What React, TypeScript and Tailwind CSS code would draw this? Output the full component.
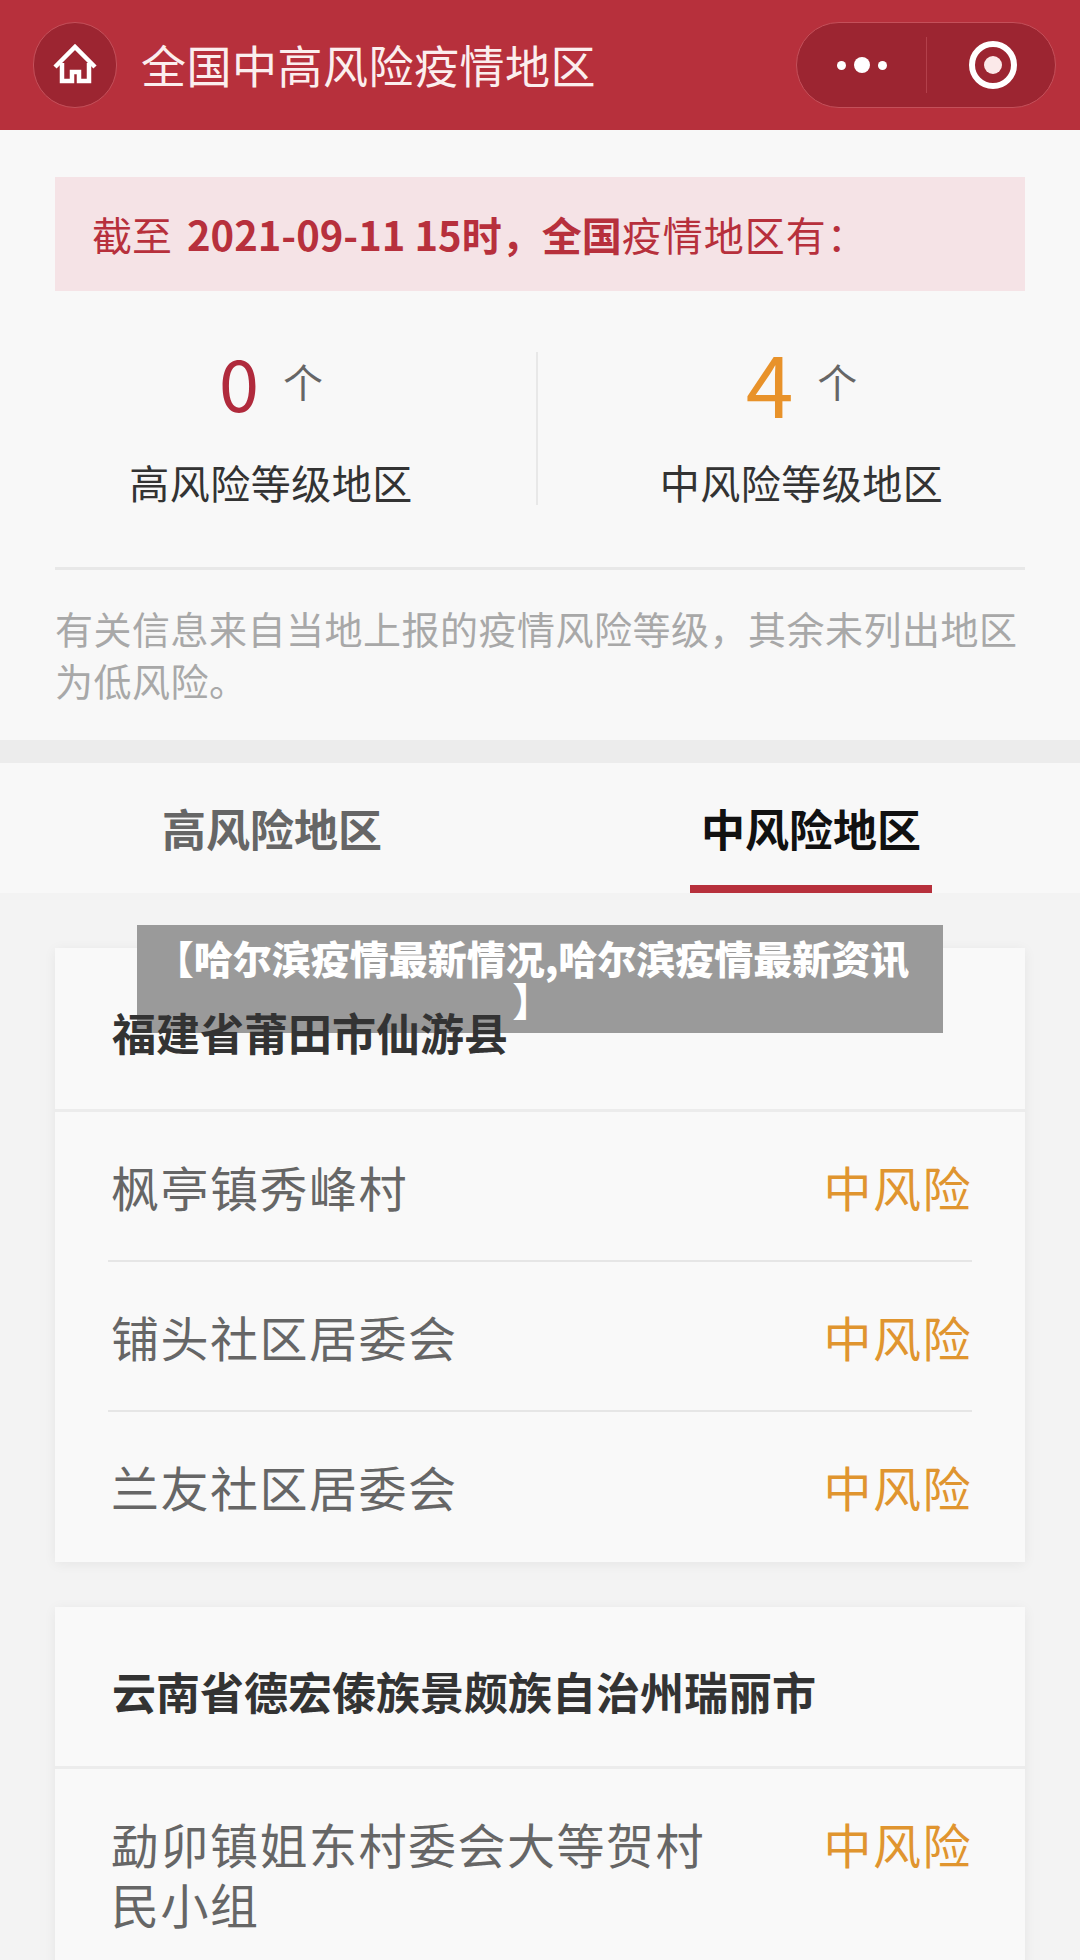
const cjk = "font-['Noto_Sans_CJK_SC','Liberation_Sans',sans-serif]";

function HomeIcon() {
  return (
    <svg width="46" height="44" viewBox="0 0 46 44" fill="none" stroke="#fff" strokeWidth="4.5" strokeLinejoin="miter">
      <path d="M3 24 L23 4 L43 24" />
      <path d="M10 20 V38 H20 V29 H27 V38 H37 V20" />
    </svg>
  );
}

function RiskRow({ name, last }: { name: string; last?: boolean }) {
  return (
    <div className="mx-[53px]">
      <div className="flex justify-between items-start py-[44px] pl-[3px]">
        <div className="w-[600px] text-[48px] leading-[60px] tracking-[1.5px] text-[#666666]">{name}</div>
        <div className="text-[48px] leading-[60px] tracking-[1.5px] text-[#e0952f]">中风险</div>
      </div>
      {!last && <div className="h-[2px] bg-[#e6e6e6]" />}
    </div>
  );
}

function AreaCard({
  title,
  rows,
  className,
  headClass,
  bodyClass,
}: {
  title: string;
  rows: string[];
  className?: string;
  headClass: string;
  bodyClass?: string;
}) {
  return (
    <div className={`mx-[55px] bg-[#f9f9f9] shadow-[0_2px_12px_rgba(0,0,0,0.06)] ${className ?? ""}`}>
      <div className={`pl-[57px] flex items-center text-[44px] font-bold text-[#333333] border-b-[3px] border-[#ececec] ${headClass}`}>
        <span className="relative z-10">{title}</span>
      </div>
      <div className={bodyClass}>
        {rows.map((r, i) => (
          <RiskRow key={r} name={r} last={i === rows.length - 1} />
        ))}
      </div>
    </div>
  );
}

export default function App() {
  return (
    <div className={`${cjk} relative w-[1080px] h-[1960px] overflow-hidden bg-[#f3f3f3]`}>
      <header className="h-[130px] bg-[#b7303c] flex items-center justify-between pl-[33px] pr-[24px]">
        <div className="flex items-center gap-[24px]">
          <div className="w-[84px] h-[86px] rounded-full bg-[#9c2531] border border-[#c4505a] flex items-center justify-center">
            <HomeIcon />
          </div>
          <span className="text-[45px] tracking-[0.5px] text-[#fbeeee]">全国中高风险疫情地区</span>
        </div>
        <div className="w-[260px] h-[86px] rounded-full bg-[#9c2531] border border-[#c4505a] flex items-center">
          <div className="w-[130px] h-[56px] border-r border-[#b3404b] flex items-center justify-center gap-[8px]">
            <span className="w-[9px] h-[9px] rounded-full bg-white" />
            <span className="w-[16px] h-[16px] rounded-full bg-white" />
            <span className="w-[9px] h-[9px] rounded-full bg-white" />
          </div>
          <div className="flex-1 flex items-center justify-center pl-[4px]">
            <div className="w-[48px] h-[48px] rounded-full border-[6px] border-white flex items-center justify-center">
              <span className="w-[18px] h-[18px] rounded-full bg-[#fbe9e9]" />
            </div>
          </div>
        </div>
      </header>

      <section className="h-[610px] bg-[#f8f8f8] px-[55px] pt-[47px]">
        <div className="h-[114px] bg-[#f5e3e6] pl-[37px] flex items-center text-[40px] text-[#b7303c] whitespace-pre">
          截至 <b className="ml-[6px]">2021-09-11 15时，全国</b><span className="tracking-[1px]">疫情地区有：</span>
        </div>
        <div className="relative flex h-[276px]">
          <div className="w-[481px] flex flex-col items-center pt-[42px] pr-[49px]">
            <div className="h-[96px] flex items-center gap-[24px]">
              <span className="text-[72px] leading-none text-[#b02a3c]">0</span>
              <span className="text-[40px] text-[#666666]">个</span>
            </div>
            <span className="mt-[25px] text-[40px] leading-[56px] tracking-[0.5px] text-[#333333]">高风险等级地区</span>
          </div>
          <div className="w-[2px] h-[153px] mt-[61px] bg-[#e8e8e8]" />
          <div className="flex-1 flex flex-col items-center pt-[42px] pl-[40px]">
            <div className="h-[96px] flex items-center gap-[24px]">
              <span className="text-[86px] leading-none text-[#e8922a]">4</span>
              <span className="text-[40px] text-[#666666]">个</span>
            </div>
            <span className="mt-[25px] text-[40px] leading-[56px] tracking-[0.5px] text-[#333333]">中风险等级地区</span>
          </div>
        </div>
        <div className="h-[3px] bg-[#e8e8e8]" />
        <p className="mt-[32px] text-[38px] leading-[52px] tracking-[0.5px] text-[#a8a8a8]">
          有关信息来自当地上报的疫情风险等级，其余未列出地区为低风险。
        </p>
      </section>

      <div className="h-[23px] bg-[#ececec]" />

      <nav className="h-[130px] bg-[#f8f8f8] flex text-[44px] font-bold whitespace-nowrap">
        <div className="ml-[162px] w-[218px] pt-[32px] text-[#666666]">高风险地区</div>
        <div className="ml-[310px] w-[242px] h-[130px] pt-[32px] text-center text-[#111111] border-b-[8px] border-[#b7303c]">中风险地区</div>
      </nav>

      <div className="pt-[55px]">
        <AreaCard headClass="h-[164px] pt-[6px]" bodyClass="pb-[2px]" title="福建省莆田市仙游县" rows={["枫亭镇秀峰村", "铺头社区居委会", "兰友社区居委会"]} />
        <AreaCard headClass="h-[162px] pt-[8px]" className="mt-[45px]" title="云南省德宏傣族景颇族自治州瑞丽市" rows={["勐卯镇姐东村委会大等贺村民小组"]} />
      </div>

      <div className="absolute z-[5] left-[137px] top-[925px] w-[806px] h-[108px] bg-[#9a9a9a] pt-[11px] pr-[16px] text-center text-[39px] leading-[42px] font-black text-white whitespace-nowrap">
        【哈尔滨疫情最新情况,哈尔滨疫情最新资讯
        <br />
        】
      </div>
    </div>
  );
}
